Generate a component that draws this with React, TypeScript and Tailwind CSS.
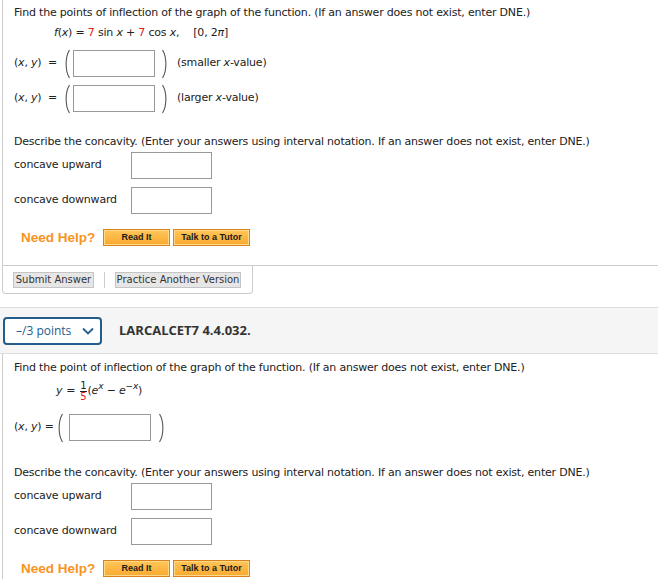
import React from "react";

const TEXT = "font-['DejaVu_Sans',Verdana,sans-serif] text-[11px] tracking-[-0.2px] text-[#222]";

const Paren = ({ right = false }: { right?: boolean }) => (
  <svg width="7" height="30" viewBox="0 0 7 30" className="shrink-0">
    <path
      d={right ? "M1.5 1 C6 8, 6 22, 1.5 29" : "M5.5 1 C1 8, 1 22, 5.5 29"}
      fill="none"
      stroke="#555"
      strokeWidth="1.1"
    />
  </svg>
);

const Box = ({ w = "w-[82px]" }: { w?: string }) => (
  <div className={`${w} h-[27px] border border-[#999] bg-white shrink-0`} />
);

const Red = ({ children }: { children: React.ReactNode }) => (
  <span className="text-[#e0201b]">{children}</span>
);

const XY = () => (
  <span>
    (<i>x</i>, <i>y</i>)
  </span>
);

const HelpRow = () => (
  <div className="flex items-center pl-[7px] tracking-normal">
    <span className="font-['Liberation_Sans',Arial,sans-serif] font-bold text-[13.5px] text-[#f7941e] leading-[17px] w-[82px]">
      Need Help?
    </span>
    <button className="w-[67px] h-[17px] border border-[#d9821b] bg-[linear-gradient(#ffc65a,#f9a92f)] shadow-[inset_0_0_0_1px_#ffd98a] font-['Liberation_Sans',Arial,sans-serif] font-bold text-[9px] text-[#1a1a1a] leading-[15px]">
      Read It
    </button>
    <button className="ml-[3px] w-[77px] h-[17px] border border-[#d9821b] bg-[linear-gradient(#ffc65a,#f9a92f)] shadow-[inset_0_0_0_1px_#ffd98a] font-['Liberation_Sans',Arial,sans-serif] font-bold text-[9px] text-[#1a1a1a] leading-[15px]">
      Talk to a Tutor
    </button>
  </div>
);

const Concavity = ({ top }: { top: string }) => (
  <>
    <p className={`${top} leading-[16px]`}>
      Describe the concavity. (Enter your answers using interval notation. If an answer does not exist, enter DNE.)
    </p>
    <div className="mt-[2px] flex items-center h-[27px]">
      <span className="w-[117px]">concave upward</span>
      <Box w="w-[81px]" />
    </div>
    <div className="mt-[8px] flex items-center h-[27px]">
      <span className="w-[117px]">concave downward</span>
      <Box w="w-[81px]" />
    </div>
  </>
);

const App = () => {
  return (
    <div className={`w-[658px] h-[579px] bg-white overflow-hidden ${TEXT}`}>
      {/* question 1 */}
      <div className="ml-[2px]">
        <div className="border-l border-b border-[#ccc] pl-[11px] pt-[5px] pb-[19px]">
          <p className="leading-[16px]">
            Find the points of inflection of the graph of the function. (If an answer does not exist, enter DNE.)
          </p>
          <p className="mt-[4px] leading-[16px] pl-[40px]">
            <i>f</i>(<i>x</i>) = <Red>7</Red> sin <i>x</i> + <Red>7</Red> cos <i>x</i>,
            <span className="ml-[14px]">[0, 2<i>π</i>]</span>
          </p>
          <div className="mt-[9px] flex items-center h-[27px]">
            <span className="w-[50px]">
              <XY /> &nbsp;=
            </span>
            <Paren />
            <span className="w-[2px]" />
            <Box />
            <span className="w-[6px]" />
            <Paren right />
            <span className="ml-[9px]">
              (smaller <i>x</i>-value)
            </span>
          </div>
          <div className="mt-[8px] flex items-center h-[27px]">
            <span className="w-[50px]">
              <XY /> &nbsp;=
            </span>
            <Paren />
            <span className="w-[2px]" />
            <Box />
            <span className="w-[6px]" />
            <Paren right />
            <span className="ml-[9px]">
              (larger <i>x</i>-value)
            </span>
          </div>
          <Concavity top="mt-[22px]" />
          <div className="mt-[15px]">
            <HelpRow />
          </div>
        </div>
        <div className="w-[251px] border-l border-r border-b border-[#ccc] rounded-b-[4px] flex items-center pl-[10px] pt-[6px] pb-[5px]">
          <button className="w-[81px] h-[16px] bg-[#e6e6e6] border border-[#c4c4c4] text-[#333] text-[10px] tracking-normal leading-[14px] whitespace-nowrap">
            Submit Answer
          </button>
          <span className="w-px h-[16px] bg-[#ccc] mx-[10px]" />
          <button className="w-[126px] h-[16px] bg-[#e6e6e6] border border-[#c4c4c4] text-[#333] text-[10px] tracking-normal leading-[14px] whitespace-nowrap">
            Practice Another Version
          </button>
        </div>
      </div>

      {/* question 2 header */}
      <div className="mt-[13px] h-[47px] bg-[#f5f5f5] border-t border-b border-[#ddd] flex items-center pl-[3px] tracking-normal">
        <button className="w-[99px] h-[28px] border-2 border-[#245d8c] rounded-[4px] bg-white flex items-center pl-[11px] font-['Open_Sans',sans-serif] text-[12px] text-[#245d8c]">
          <span>–/3 points</span>
          <svg width="12" height="8" viewBox="0 0 12 8" className="ml-[11px]">
            <path d="M1 1.5 L6 6.5 L11 1.5" fill="none" stroke="#245d8c" strokeWidth="1.8" />
          </svg>
        </button>
        <span className="ml-[17px] font-['Open_Sans',sans-serif] font-bold text-[13px] text-[#333]">
          LARCALCET7 4.4.032.
        </span>
      </div>

      {/* question 2 */}
      <div className="ml-[2px] border-l border-[#ccc] pl-[11px] pt-[6px] pb-[20px]">
        <p className="leading-[16px]">
          Find the point of inflection of the graph of the function. (If an answer does not exist, enter DNE.)
        </p>
        <div className="mt-[2px] pl-[42px] flex items-center h-[26px]">
          <i>y</i>
          <span className="mx-[4px]">=</span>
          <span className="inline-flex flex-col items-center text-[10px] leading-[10px]">
            <span className="px-[1px]">1</span>
            <span className="w-[7px] h-px bg-[#222]" />
            <span className="text-[#e0201b]">5</span>
          </span>
          <span>
            (<i>e</i>
            <sup className="text-[9px] -top-[5px]">
              <i>x</i>
            </sup>{" "}
            − <i>e</i>
            <sup className="text-[9px] -top-[5px]">
              −<i>x</i>
            </sup>
            )
          </span>
        </div>
        <div className="mt-[10px] flex items-center h-[27px]">
          <span className="w-[43px]">
            <XY /> =
          </span>
          <Paren />
          <span className="w-[5px]" />
          <Box />
          <span className="w-[7px]" />
          <Paren right />
        </div>
        <Concavity top="mt-[24px]" />
        <div className="mt-[15px]">
          <HelpRow />
        </div>
      </div>
    </div>
  );
};

export default App;
